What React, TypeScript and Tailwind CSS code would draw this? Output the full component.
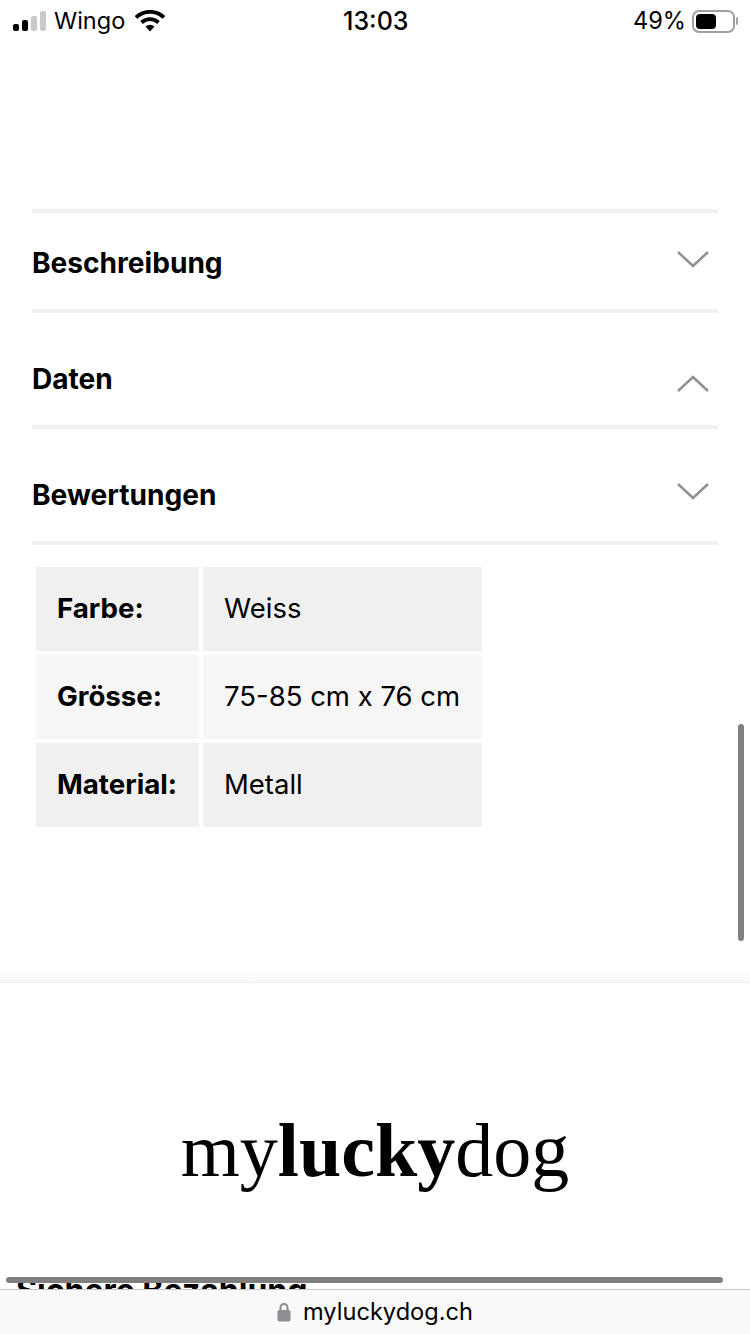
const inter = { fontFamily: '"Inter", "Liberation Sans", sans-serif' };

function Chevron({ up }: { up?: boolean }) {
  return (
    <svg width="34" height="20" viewBox="0 0 34 20" fill="none" className="shrink-0">
      <path
        d={up ? "M2 18 L17 4 L32 18" : "M2 3 L17 17 L32 3"}
        stroke="#929292"
        strokeWidth="2.6"
      />
    </svg>
  );
}

function AccordionRow({ label, up, top, bottom, iconTop }: { label: string; up?: boolean; top: string; bottom: string; iconTop: string }) {
  return (
    <div className={`flex justify-between border-b-4 border-[#f1f1f1] pr-[8px] ${top} ${bottom}`}>
      <span className="text-[28.1px] font-bold leading-[36px] text-black">{label}</span>
      <span className={iconTop}>
        <Chevron up={up} />
      </span>
    </div>
  );
}

function Row({ k, v, bg }: { k: string; v: string; bg: string }) {
  return (
    <>
      <div className={`${bg} flex h-[84px] items-center pb-[1px] pl-[21px] text-[27.7px] font-bold text-black`}>{k}</div>
      <div className={`${bg} flex h-[84px] items-center pl-[21px] text-[27.5px] text-black`}>{v}</div>
    </>
  );
}

export default function App() {
  return (
    <div className="relative flex h-[1334px] w-[750px] flex-col overflow-hidden bg-white" style={inter}>
      {/* status bar */}
      <div className="relative flex h-[42px] shrink-0 items-center justify-between pl-[13px] pr-[12px] text-black">
        <div className="flex items-center">
          <svg width="34" height="20" viewBox="0 0 34 20" className="shrink-0">
            <rect x="0" y="13" width="6" height="7" rx="2" fill="#000" />
            <rect x="9" y="9" width="6" height="11" rx="2" fill="#000" />
            <rect x="18" y="5" width="6" height="15" rx="2" fill="#c9c9c9" />
            <rect x="27" y="0" width="6" height="20" rx="2" fill="#c9c9c9" />
          </svg>
          <span className="ml-[7px] text-[23.5px] leading-none">Wingo</span>
          <svg width="30" height="22" viewBox="0 0 30 22" className="ml-[10px] shrink-0">
            <path d="M1 7.5 A20 20 0 0 1 29 7.5" fill="none" stroke="#000" strokeWidth="3.8" />
            <path d="M6.5 12.5 A12.5 12.5 0 0 1 23.5 12.5" fill="none" stroke="#000" strokeWidth="3.8" />
            <path d="M10.5 16.5 A7 7 0 0 1 19.5 16.5 L15 21.5 Z" fill="#000" />
          </svg>
        </div>
        <span className="absolute left-[343px] top-[7px] text-[25px] font-medium leading-[28px]">13:03</span>
        <div className="flex items-center">
          <span className="text-[23.6px] leading-none">49%</span>
          <div className="ml-[6px] flex h-[23px] w-[43px] items-center rounded-[7px] border-2 border-[#a0a0a0] p-[2px]">
            <div className="h-full w-[20px] rounded-[4px] bg-black" />
          </div>
          <div className="ml-[1px] h-[8px] w-[2px] rounded-r bg-[#a0a0a0]" />
        </div>
      </div>

      {/* page */}
      <div className="flex-1 overflow-hidden">
        <div className="pl-[32px] pr-[32px] pt-[167px]">
          <div className="h-[4px] bg-[#f1f1f1]" />
          <AccordionRow label="Beschreibung" top="pt-[32px]" bottom="pb-[28px]" iconTop="pt-[4px]" />
          <AccordionRow label="Daten" up top="pt-[48px]" bottom="pb-[28px]" iconTop="pt-[12px]" />
          <AccordionRow label="Bewertungen" top="pt-[48px]" bottom="pb-[28px]" iconTop="pt-[4px]" />
          <div className="ml-[4px] mt-[22px] grid w-[446px] grid-cols-[163px_279px] gap-[4px]">
            <Row k="Farbe:" v="Weiss" bg="bg-[#f0f0f0]" />
            <Row k="Grösse:" v="75-85 cm x 76 cm" bg="bg-[#f6f6f6]" />
            <Row k="Material:" v="Metall" bg="bg-[#f0f0f0]" />
          </div>
        </div>

        <div className="mt-[143px] h-[12px] bg-gradient-to-b from-white to-[#f8f8f8]" />
        <div className="border-t border-[#f0f0f0] pt-[117px] text-center">
          <div className="text-[76px] leading-[100px] text-black" style={{ fontFamily: '"Liberation Serif", serif' }}>
            my<span className="font-bold">lucky</span>dog
          </div>
        </div>
        <div className="mt-[71px] pl-[16px] text-[32px] font-bold leading-[40px] text-black">Sichere Bezahlung</div>
      </div>

      {/* browser bar */}
      <div className="relative flex h-[45px] shrink-0 items-center justify-center border-t border-[#c8c8c8] bg-[#f9f9f9]">
        <svg width="14" height="20" viewBox="0 0 14 20" className="mr-[12px] shrink-0">
          <path d="M3.5 9 V5.5 A3.5 3.5 0 0 1 10.5 5.5 V9" fill="none" stroke="#8e8e93" strokeWidth="2" />
          <rect x="0.5" y="8" width="13" height="11.5" rx="2" fill="#8e8e93" />
        </svg>
        <span className="text-[23.6px] leading-none text-black">myluckydog.ch</span>
      </div>

      {/* scrollbars */}
      <div className="absolute left-[6px] top-[1277px] h-[6px] w-[717px] rounded-full bg-[#808080]" />
      <div className="absolute left-[738px] top-[724px] h-[217px] w-[6px] rounded-full bg-[#808080]" />
    </div>
  );
}
